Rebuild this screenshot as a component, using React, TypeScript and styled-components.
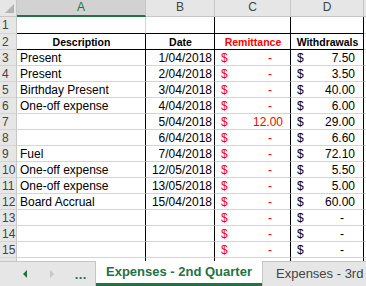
import * as React from 'react';
import styled, { createGlobalStyle } from 'styled-components';

const GREEN = '#217346';
const GRID = '#d4d4d4';
const HEAD_BG = '#e6e6e6';
const HEAD_LINE = '#c6c6c6';

type Entry = { desc: string; date: string; rem: string; wd: string };

const entries: Entry[] = [
  { desc: 'Present', date: '1/04/2018', rem: '-', wd: '7.50' },
  { desc: 'Present', date: '2/04/2018', rem: '-', wd: '3.50' },
  { desc: 'Birthday Present', date: '3/04/2018', rem: '-', wd: '40.00' },
  { desc: 'One-off expense', date: '4/04/2018', rem: '-', wd: '6.00' },
  { desc: '', date: '5/04/2018', rem: '12.00', wd: '29.00' },
  { desc: '', date: '6/04/2018', rem: '-', wd: '6.60' },
  { desc: 'Fuel', date: '7/04/2018', rem: '-', wd: '72.10' },
  { desc: 'One-off expense', date: '12/05/2018', rem: '-', wd: '5.50' },
  { desc: 'One-off expense', date: '13/05/2018', rem: '-', wd: '5.00' },
  { desc: 'Board Accrual', date: '15/04/2018', rem: '-', wd: '60.00' },
  { desc: '', date: '', rem: '-', wd: '-' },
  { desc: '', date: '', rem: '-', wd: '-' },
  { desc: '', date: '', rem: '-', wd: '-' },
  { desc: '', date: '', rem: '-', wd: '-' }
];

const GlobalStyle = createGlobalStyle`
  html, body { margin: 0; padding: 0; background: #fff; }
  body { font-family: 'Liberation Sans', Arial, sans-serif; }
  * { box-sizing: border-box; }
`;

// ── Sheet ─────────────────────────────
const Window = styled.div`
  width: 366px;
  height: 286px;
  display: flex;
  flex-direction: column;
  overflow: hidden;
  background: #fff;
`;

const Sheet = styled.div`
  flex: 1;
  min-height: 0;
  overflow: hidden;
  display: grid;
  grid-template-columns: 17px 129px 69px 76px 73px 1fr;
  grid-template-rows: 17px 17px;
  grid-auto-rows: 16px;
`;

const Corner = styled.div`
  background: ${HEAD_BG};
  border-right: 1px solid ${HEAD_LINE};
  border-bottom: 1px solid ${HEAD_LINE};
  display: flex;
  align-items: flex-end;
  justify-content: flex-end;
  padding: 0 2px 3px 0;
`;

const ColHead = styled.div<{ $selected?: boolean }>`
  background: ${({ $selected }) => ($selected ? '#d2d2d2' : HEAD_BG)};
  color: ${({ $selected }) => ($selected ? GREEN : '#444')};
  border-right: 1px solid ${HEAD_LINE};
  border-bottom: ${({ $selected }) => ($selected ? `2px solid ${GREEN}` : `1px solid ${HEAD_LINE}`)};
  font-size: 12px;
  line-height: 15px;
  text-align: center;
`;

const RowHead = styled.div`
  background: ${HEAD_BG};
  color: #444;
  border-right: 1px solid ${HEAD_LINE};
  border-bottom: 1px solid ${GRID};
  font-size: 12px;
  line-height: 16px;
  padding-left: 2px;
  white-space: nowrap;
  overflow: hidden;
`;

const Cell = styled.div<{
  $align?: 'left' | 'center' | 'right';
  $color?: string;
  $bold?: boolean;
  $size?: number;
  $right?: boolean;
  $bottom?: boolean;
}>`
  border-right: 1px solid ${({ $right }) => ($right ? '#000' : GRID)};
  border-bottom: 1px solid ${({ $bottom }) => ($bottom ? '#000' : GRID)};
  text-align: ${({ $align }) => $align ?? 'left'};
  color: ${({ $color }) => $color ?? '#000'};
  font-weight: ${({ $bold }) => ($bold ? 700 : 400)};
  font-size: ${({ $size }) => $size ?? 12}px;
  line-height: 16px;
  padding: 0 2px 0 3px;
  white-space: nowrap;
  overflow: hidden;
`;

const AcctCell = styled.div<{ $color: string; $pad: number }>`
  border-right: 1px solid #000;
  border-bottom: 1px solid ${GRID};
  color: ${({ $color }) => $color};
  font-size: 12px;
  line-height: 16px;
  display: flex;
  justify-content: space-between;
  padding: 0 ${({ $pad }) => $pad}px 0 6px;
  white-space: nowrap;
  overflow: hidden;
`;

const Amount = styled.span<{ $dash: boolean }>`
  padding-right: ${({ $dash }) => ($dash ? 11 : 0)}px;
`;

// ── Tabs ─────────────────────────────
const TabBar = styled.div`
  height: 25px;
  flex-shrink: 0;
  display: flex;
`;

const TabNav = styled.div`
  width: 96px;
  background: ${HEAD_BG};
  border-top: 1px solid ${HEAD_LINE};
  border-right: 1px solid ${HEAD_LINE};
  display: flex;
  align-items: center;
  padding-left: 10px;
`;

const NavButton = styled.div<{ $color: string }>`
  width: 29px;
  height: 100%;
  display: flex;
  align-items: center;
  justify-content: center;
  color: ${({ $color }) => $color};
  font-size: 13px;
  font-weight: 700;
  letter-spacing: 0.5px;
`;

const ActiveTab = styled.div`
  width: 166px;
  background: #fff;
  border-bottom: 3px solid ${GREEN};
  color: ${GREEN};
  font-size: 13px;
  font-weight: 700;
  line-height: 22px;
  text-align: center;
  white-space: nowrap;
`;

const Tab = styled.div`
  flex: 1;
  background: ${HEAD_BG};
  border-top: 1px solid ${HEAD_LINE};
  border-left: 1px solid ${HEAD_LINE};
  color: #444;
  font-size: 13px;
  line-height: 24px;
  padding-left: 13px;
  white-space: nowrap;
  overflow: hidden;
`;

function Accounting({ value, color, pad }: { value: string; color: string; pad: number }) {
  return (
    <AcctCell $color={color} $pad={pad}>
      <span>$</span>
      <Amount $dash={value === '-'}>{value}</Amount>
    </AcctCell>
  );
}

export default function App(): React.ReactElement {
  return (
    <Window>
      <GlobalStyle />
      <Sheet>
        <Corner>
          <svg width="9" height="9" viewBox="0 0 9 9">
            <polygon points="9,0 9,9 0,9" fill="#b4b4b4" />
          </svg>
        </Corner>
        <ColHead $selected>A</ColHead>
        <ColHead>B</ColHead>
        <ColHead>C</ColHead>
        <ColHead>D</ColHead>
        <ColHead />

        <RowHead>1</RowHead>
        <Cell $bottom />
        <Cell $bottom $right />
        <Cell $bottom $right />
        <Cell $bottom $right />
        <Cell />

        <RowHead>2</RowHead>
        <Cell $bold $size={10.5} $align="center" $bottom $right>Description</Cell>
        <Cell $bold $size={10.5} $align="center" $bottom $right>Date</Cell>
        <Cell $bold $size={10.5} $align="center" $color="#ff0000" $bottom $right>Remittance</Cell>
        <Cell $bold $size={10.5} $align="center" $bottom $right>Withdrawals</Cell>
        <Cell />

        {entries.map((e, i) => (
          <React.Fragment key={i}>
            <RowHead>{i + 3}</RowHead>
            <Cell $right>{e.desc}</Cell>
            <Cell $right $align="right">{e.date}</Cell>
            <Accounting value={e.rem} color="#ff0000" pad={7} />
            <Accounting value={e.wd} color="#000" pad={8} />
            <Cell />
          </React.Fragment>
        ))}
      </Sheet>

      <TabBar>
        <TabNav>
          <NavButton $color={GREEN}>
            <svg width="5" height="8" viewBox="0 0 5 8">
              <polygon points="5,0 5,8 1,4" fill={GREEN} />
            </svg>
          </NavButton>
          <NavButton $color="#bfbfbf">
            <svg width="5" height="8" viewBox="0 0 5 8">
              <polygon points="0,0 0,8 4,4" fill="#c8c8c8" />
            </svg>
          </NavButton>
          <NavButton $color={GREEN}>...</NavButton>
        </TabNav>
        <ActiveTab>Expenses - 2nd Quarter</ActiveTab>
        <Tab>Expenses - 3rd</Tab>
      </TabBar>
    </Window>
  );
}
